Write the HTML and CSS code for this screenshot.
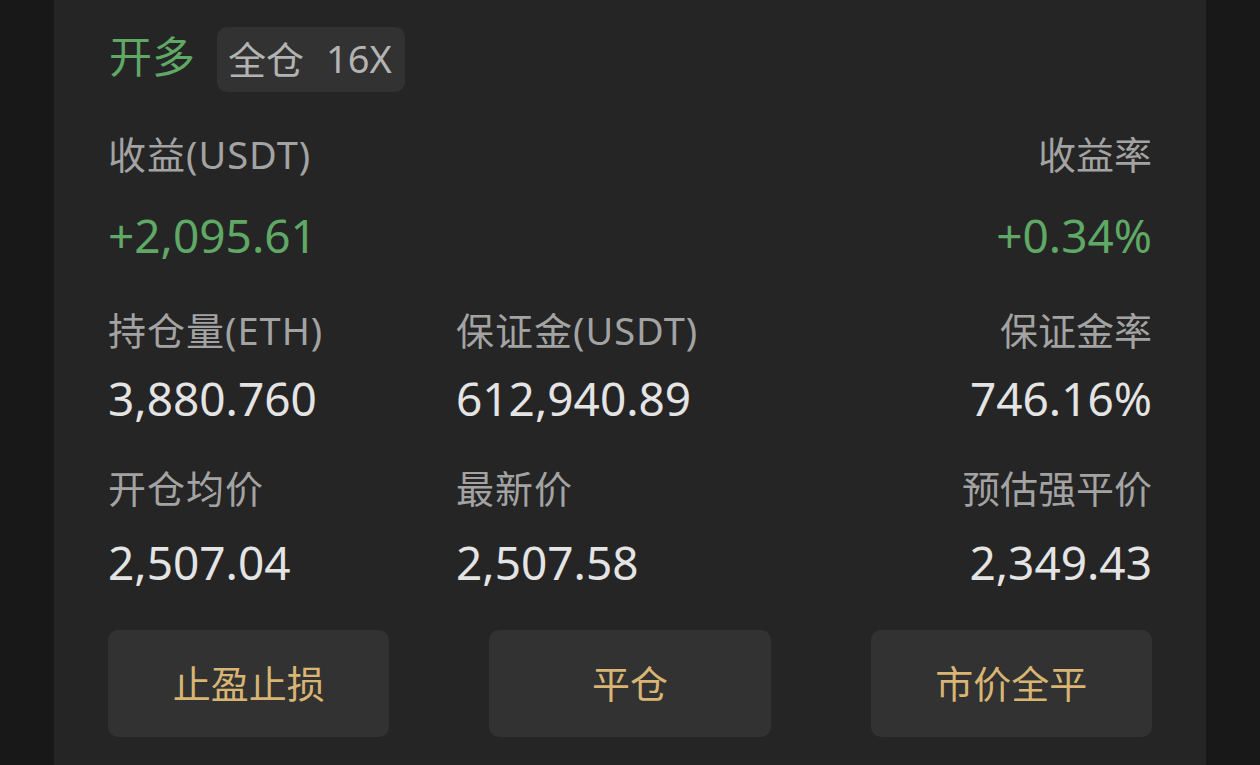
FILE: index.html
```html
<!DOCTYPE html>
<html>
	<head>
		<meta charset="utf-8">
		<link rel="stylesheet" href="styles.css">
	</head>
	<body>
		<div id="panel">
			<div class="head">
				<span class="side">开多</span>
				<span class="tag">全仓<span class="lev">16X</span></span>
			</div>

			<div class="grid first">
				<div class="cell">
					<div class="label">收益(USDT)</div>
					<div class="value green">+2,095.61</div>
				</div>
				<div class="cell"></div>
				<div class="cell right">
					<div class="label">收益率</div>
					<div class="value green">+0.34%</div>
				</div>
			</div>

			<div class="grid second">
				<div class="cell">
					<div class="label">持仓量(ETH)</div>
					<div class="value">3,880.760</div>
				</div>
				<div class="cell">
					<div class="label">保证金(USDT)</div>
					<div class="value">612,940.89</div>
				</div>
				<div class="cell right">
					<div class="label">保证金率</div>
					<div class="value">746.16%</div>
				</div>
			</div>

			<div class="grid third">
				<div class="cell">
					<div class="label">开仓均价</div>
					<div class="value">2,507.04</div>
				</div>
				<div class="cell">
					<div class="label">最新价</div>
					<div class="value">2,507.58</div>
				</div>
				<div class="cell right">
					<div class="label">预估强平价</div>
					<div class="value">2,349.43</div>
				</div>
			</div>

			<div class="buttons">
				<div class="btn">止盈止损</div>
				<div class="btn">平仓</div>
				<div class="btn">市价全平</div>
			</div>
		</div>
	</body>
</html>
```

FILE: styles.css
```css
html, body{
	margin:0;
	padding:0;
	height:100%;
	background:#181818;
	font-family: "Noto Sans", "Noto Sans CJK SC", sans-serif;
	overflow:hidden;
}

#panel{
	width:1152px;
	height:765px;
	margin-left:54px;
	background:#252525;
	box-sizing:border-box;
	padding:27px 54px 0 54px;
}

.head{
	display:flex;
	align-items:center;
	height:65px;
}

.side{
	color:#5fa866;
	font-size:43px;
	margin-left:1px;
	margin-right:22px;
	margin-bottom:10px;
}

.tag{
	display:flex;
	align-items:center;
	height:65px;
	box-sizing:border-box;
	padding:0 13px 4px 11px;
	background:#323232;
	border-radius:10px;
	color:#b3b3b3;
	font-size:38px;
}

.lev{
	margin-left:22px;
}

.grid{
	display:grid;
	grid-template-columns:1fr 1fr 1fr;
}

.first{ margin-top:40px; }
.second{ margin-top:45px; }
.third{ margin-top:40px; }

.cell.right{
	text-align:right;
}

.label{
	color:#a3a3a3;
	font-size:38px;
	line-height:44px;
	letter-spacing:1px;
}

.cell.right .label{
	letter-spacing:0;
}

.value{
	color:#e4e4e4;
	font-size:46px;
	line-height:56px;
	margin-top:18px;
}

.first .value{ margin-top:31px; }
.third .value{ margin-top:24px; }

.value.green{
	color:#5fa866;
}

.buttons{
	display:grid;
	grid-template-columns:1fr 1fr 1fr;
	column-gap:100px;
	margin-top:40px;
}

.btn{
	height:107px;
	background:#323232;
	border-radius:10px;
	color:#d8b574;
	font-size:38px;
	display:flex;
	align-items:center;
	justify-content:center;
	padding-bottom:4px;
	box-sizing:border-box;
}
```
